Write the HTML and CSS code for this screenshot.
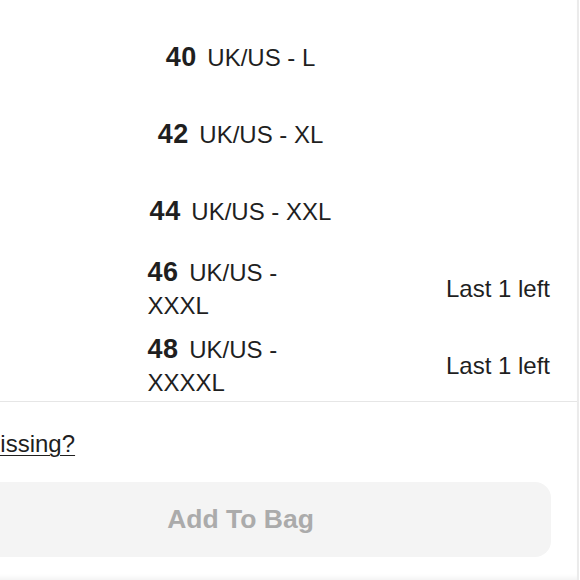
FILE: index.html
```html
<!DOCTYPE html>
<html lang="en">
<head>
<meta charset="utf-8">
<title>Select size</title>
<link rel="stylesheet" href="styles.css">
</head>
<body>
<div class="panel">
  <ul class="sizes">
    <li class="size-row"><span class="label"><b>40</b> UK/US - L</span><span class="stock"></span></li>
    <li class="size-row"><span class="label"><b>42</b> UK/US - XL</span><span class="stock"></span></li>
    <li class="size-row"><span class="label"><b>44</b> UK/US - XXL</span><span class="stock"></span></li>
    <li class="size-row"><span class="label"><b>46</b> UK/US - XXXL</span><span class="stock">Last 1 left</span></li>
    <li class="size-row"><span class="label"><b>48</b> UK/US - XXXXL</span><span class="stock">Last 1 left</span></li>
  </ul>
  <div class="footer">
    <a class="missing" href="#">Size missing?</a>
    <button class="add-btn" type="button" disabled>Add To Bag</button>
  </div>
</div>
</body>
</html>
```

FILE: styles.css
```css
html, body {
  margin: 0;
  padding: 0;
  background: #ffffff;
}
body {
  width: 580px;
  height: 580px;
  overflow: hidden;
  font-family: "Liberation Sans", Arial, sans-serif;
  color: #1f1f1f;
}
.panel {
  box-sizing: border-box;
  width: 674px;
  height: 580px;
  margin-left: -95px;
  border-right: 2px solid #ebebeb;
  box-shadow: inset 0 -5px 5px -3px rgba(0, 0, 0, 0.06);
}
.sizes {
  list-style: none;
  margin: 0;
  box-sizing: border-box;
  height: 402px;
  padding: 19px 26px 0 25px;
  overflow: hidden;
  border-bottom: 1px solid #e6e6e6;
}
.size-row {
  display: grid;
  grid-template-columns: 1fr 186px 1fr;
  align-items: center;
  height: 77px;
  font-size: 24px;
  line-height: 33px;
}
.label {
  grid-column: 2;
  justify-self: center;
}
.label b {
  font-size: 27px;
  line-height: 1;
  letter-spacing: 0.5px;
  margin-right: 4px;
}
.stock {
  grid-column: 3;
  text-align: right;
  padding-right: 1px;
}
.footer {
  padding: 25px 26px 0 25px;
}
.missing {
  display: block;
  margin-left: -3px;
  font-size: 24px;
  line-height: 33px;
  color: #1f1f1f;
  text-decoration: underline;
  text-underline-offset: 3px;
  text-decoration-thickness: 1px;
}
.add-btn {
  display: block;
  width: 100%;
  height: 75px;
  margin-top: 22px;
  border: none;
  border-radius: 16px;
  background: #f4f4f4;
  color: #ababab;
  font-family: "Liberation Sans", Arial, sans-serif;
  font-weight: bold;
  font-size: 26.5px;
}
```
